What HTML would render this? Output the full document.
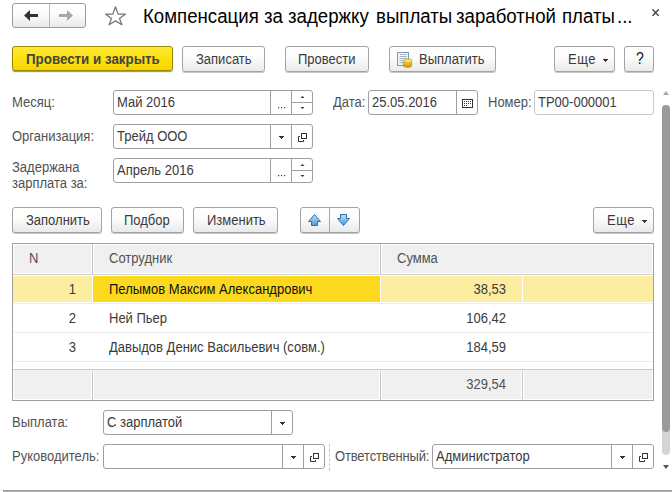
<!DOCTYPE html>
<html><head><meta charset="utf-8">
<style>
html,body{margin:0;padding:0;}
body{width:672px;height:492px;overflow:hidden;background:#fff;position:relative;font-family:"Liberation Sans",sans-serif;font-size:13px;color:#3a3a3a;}
.a{position:absolute;}
.t{position:absolute;white-space:nowrap;line-height:15px;font-size:14px;transform:scaleX(0.9286);transform-origin:0 0;}
.r{text-align:right;transform-origin:100% 0;}
.ttl{font-size:20px !important;line-height:22px;color:#000;transform:scaleX(0.9325);}
.btn{position:absolute;box-sizing:border-box;height:26px;border:1px solid #a3a3a3;border-radius:3px;background:linear-gradient(#ffffff 0%,#fcfcfc 45%,#e9e9e9 100%);box-shadow:0 1px 0 rgba(0,0,0,0.22);}
.yb{background:linear-gradient(#ffe83a 0%,#fde10a 50%,#f5d500 100%);border-color:#9c8700;box-shadow:0 1px 0 rgba(100,85,0,0.55),0 2px 0 rgba(0,0,40,0.06);}
.fld{position:absolute;box-sizing:border-box;height:25px;border:1px solid #a0a0a0;border-radius:3px;background:#fff;}
.sep{position:absolute;top:0;bottom:0;width:1px;background:#a0a0a0;}
.lbl{color:#525252;}
.dd{position:absolute;width:5px;height:1px;background:#333;}
.dd::before{content:"";position:absolute;left:1px;top:1px;width:3px;height:1px;background:#333;}
.dd::after{content:"";position:absolute;left:2px;top:2px;width:1px;height:1px;background:#333;}
</style></head>
<body>
<!-- nav -->
<div class="btn" style="left:12px;top:3px;width:74px;height:25px;box-shadow:none;border-color:#9c9c9c;"></div>
<div class="a" style="left:49px;top:4px;width:1px;height:23px;background:#b8b8b8;"></div>
<svg class="a" style="left:0;top:0" width="672" height="40">
  <polygon points="24,15.5 30,10 30,21" fill="#333"/>
  <rect x="30" y="14" width="8" height="3" fill="#333"/>
  <polygon points="73,15.5 67,10 67,21" fill="#a8a8a8"/>
  <rect x="59" y="14" width="8" height="3" fill="#a8a8a8"/>
  <polygon points="115.5,6.8 118.1,14 125.6,14 119.5,18.6 121.9,24.8 115.5,20.9 109.1,24.8 111.5,18.6 105.4,14 112.9,14" fill="none" stroke="#777" stroke-width="1.25" stroke-linejoin="round"/>
  <path d="M652.8,9.8 L658.4,15.4 M658.4,9.8 L652.8,15.4" stroke="#444" stroke-width="1.35" stroke-linecap="round"/>
</svg>
<div class="t ttl" style="left:143px;top:5px;">Компенсация</div>
<div class="t ttl" style="left:264px;top:5px;">за</div>
<div class="t ttl" style="left:288px;top:5px;">задержку</div>
<div class="t ttl" style="left:376px;top:5px;">выплаты</div>
<div class="t ttl" style="left:456px;top:5px;">заработной</div>
<div class="t ttl" style="left:562px;top:5px;">платы</div>
<div class="t ttl" style="left:617px;top:5px;">...</div>

<!-- toolbar -->
<div class="btn yb" style="left:12px;top:46px;width:161px;height:25px;"></div>
<div class="t" style="left:26px;top:52px;font-weight:bold;color:#444;transform:scaleX(0.953);">Провести и закрыть</div>
<div class="btn" style="left:182px;top:46px;width:83px;"></div>
<div class="t" style="left:196px;top:52px;">Записать</div>
<div class="btn" style="left:285px;top:46px;width:84px;"></div>
<div class="t" style="left:298px;top:52px;">Провести</div>
<div class="btn" style="left:389px;top:46px;width:107px;"></div>
<svg class="a" style="left:396px;top:51px" width="18" height="18">
  <defs><linearGradient id="dg" x1="0" y1="0" x2="1" y2="1"><stop offset="0" stop-color="#ffffff"/><stop offset="1" stop-color="#dfe8f2"/></linearGradient></defs>
  <rect x="1.5" y="1.5" width="11" height="13" fill="url(#dg)" stroke="#7e97b4"/>
  <path d="M3.5,3.5h7M3.5,5.5h7M3.5,7.5h7M3.5,9.5h6M3.5,11.5h4" stroke="#a6b4c4"/>
  <ellipse cx="11.5" cy="14.3" rx="4.3" ry="2.1" fill="#e0a400" stroke="#b07f00" stroke-width="0.6"/>
  <ellipse cx="11.5" cy="12.2" rx="4.3" ry="2.1" fill="#f0c020" stroke="#b88a00" stroke-width="0.6"/>
  <ellipse cx="12" cy="9.9" rx="4.2" ry="2" fill="#ffe06a" stroke="#c09000" stroke-width="0.6"/>
</svg>
<div class="t" style="left:419px;top:52px;">Выплатить</div>
<div class="btn" style="left:554px;top:46px;width:61px;"></div>
<div class="t" style="left:568px;top:52px;letter-spacing:0.5px;">Еще</div>
<div class="dd" style="left:603px;top:59px;"></div>
<div class="btn" style="left:624px;top:46px;width:30px;"></div>
<div class="t" style="left:636px;top:50px;font-size:15.6px;line-height:17px;color:#111;transform:scaleX(0.9);">?</div>

<!-- row 1 -->
<div class="t lbl" style="left:12px;top:95px;">Месяц:</div>
<div class="fld" style="left:113px;top:90px;width:200px;">
  <div class="sep" style="left:156px;"></div>
  <div class="sep" style="left:177px;"></div>
  <div class="a" style="left:178px;top:11px;width:20px;height:1px;background:#a0a0a0;"></div>
</div>
<div class="t" style="left:117px;top:95px;">Май 2016</div>
<svg class="a" style="left:270px;top:90px" width="44" height="25">
  <rect x="8" y="17" width="1.2" height="1.2" fill="#444"/><rect x="11" y="17" width="1.2" height="1.2" fill="#444"/><rect x="14" y="17" width="1.2" height="1.2" fill="#444"/>
  <polygon points="30.5,8 32.5,6 34.5,8" fill="#333"/>
  <polygon points="30.5,17 32.5,19 34.5,17" fill="#333"/>
</svg>
<div class="t lbl" style="left:333px;top:95px;">Дата:</div>
<div class="fld" style="left:368px;top:90px;width:110px;">
  <div class="sep" style="left:87px;"></div>
</div>
<div class="t" style="left:372px;top:95px;">25.05.2016</div>
<svg class="a" style="left:462px;top:99px" width="11" height="9">
  <rect x="0.5" y="0.5" width="10" height="8" fill="none" stroke="#333"/>
  <g fill="#333"><rect x="2" y="2" width="1" height="1"/><rect x="4" y="2" width="1" height="1"/><rect x="6" y="2" width="1" height="1"/><rect x="8" y="2" width="1" height="1"/>
  <rect x="2" y="4" width="1" height="1"/><rect x="4" y="4" width="1" height="1"/><rect x="6" y="4" width="1" height="1"/><rect x="8" y="4" width="1" height="1"/>
  <rect x="2" y="6" width="1" height="1"/><rect x="4" y="6" width="1" height="1"/></g>
</svg>
<div class="t lbl" style="left:488px;top:95px;">Номер:</div>
<div class="fld" style="left:534px;top:90px;width:120px;border-color:#c8c8c8;"></div>
<div class="t" style="left:538px;top:95px;">ТР00-000001</div>

<!-- row 2 -->
<div class="t lbl" style="left:12px;top:129px;">Организация:</div>
<div class="fld" style="left:113px;top:124px;width:200px;">
  <div class="sep" style="left:156px;"></div>
  <div class="sep" style="left:177px;"></div>
</div>
<div class="t" style="left:117px;top:129px;">Трейд ООО</div>
<div class="dd" style="left:279px;top:136px;"></div>
<svg class="a" style="left:298px;top:133px" width="9" height="9">
  <rect x="3.5" y="0.5" width="5" height="5" fill="none" stroke="#333"/>
  <path d="M2,3.5H0.5V8.5H5.5V7" fill="none" stroke="#333"/>
</svg>

<!-- row 3 -->
<div class="t lbl" style="left:12px;top:159px;line-height:16px;">Задержана<br>зарплата за:</div>
<div class="fld" style="left:113px;top:158px;width:200px;">
  <div class="sep" style="left:156px;"></div>
  <div class="sep" style="left:177px;"></div>
  <div class="a" style="left:178px;top:11px;width:20px;height:1px;background:#a0a0a0;"></div>
</div>
<div class="t" style="left:117px;top:163px;">Апрель 2016</div>
<svg class="a" style="left:270px;top:158px" width="44" height="25">
  <rect x="8" y="17" width="1.2" height="1.2" fill="#444"/><rect x="11" y="17" width="1.2" height="1.2" fill="#444"/><rect x="14" y="17" width="1.2" height="1.2" fill="#444"/>
  <polygon points="30.5,8 32.5,6 34.5,8" fill="#333"/>
  <polygon points="30.5,17 32.5,19 34.5,17" fill="#333"/>
</svg>

<!-- table commands -->
<div class="btn" style="left:12px;top:207px;width:90px;"></div>
<div class="t" style="left:26px;top:213px;">Заполнить</div>
<div class="btn" style="left:111px;top:207px;width:73px;"></div>
<div class="t" style="left:124px;top:213px;">Подбор</div>
<div class="btn" style="left:193px;top:207px;width:85px;"></div>
<div class="t" style="left:207px;top:213px;">Изменить</div>
<div class="btn" style="left:300px;top:207px;width:60px;"></div>
<div class="a" style="left:329px;top:208px;width:1px;height:24px;background:#a8a8a8;"></div>
<svg class="a" style="left:300px;top:207px" width="60" height="25">
  <defs><linearGradient id="bl" x1="0" y1="0" x2="0" y2="1"><stop offset="0" stop-color="#bfe0f8"/><stop offset="1" stop-color="#4b9ad8"/></linearGradient></defs>
  <path d="M8.5,14.5 L14.5,7.5 L20.5,14.5 L17.5,14.5 L17.5,18.5 L11.5,18.5 L11.5,14.5 Z" fill="url(#bl)" stroke="#2f6fa8" stroke-linejoin="round"/>
  <path d="M37.5,11.5 L43.5,18.5 L49.5,11.5 L46.5,11.5 L46.5,7.5 L40.5,7.5 L40.5,11.5 Z" fill="url(#bl)" stroke="#2f6fa8" stroke-linejoin="round"/>
</svg>
<div class="btn" style="left:593px;top:207px;width:61px;"></div>
<div class="t" style="left:607px;top:213px;letter-spacing:0.5px;">Еще</div>
<div class="dd" style="left:642px;top:220px;"></div>

<!-- table -->
<div class="a" style="left:12px;top:243px;width:640px;height:156px;border:1px solid #a0a0a0;"></div>
<!-- header -->
<div class="a" style="left:14px;top:245px;width:77px;height:28px;background:#f0f0f0;"></div>
<div class="a" style="left:92px;top:244px;width:1px;height:30px;background:#c4c4c4;"></div>
<div class="a" style="left:94px;top:245px;width:285px;height:28px;background:#f0f0f0;"></div>
<div class="a" style="left:380px;top:244px;width:1px;height:30px;background:#c4c4c4;"></div>
<div class="a" style="left:382px;top:245px;width:270px;height:28px;background:#f0f0f0;"></div>
<div class="a" style="left:13px;top:274px;width:640px;height:1px;background:#d0d0d0;"></div>
<div class="t lbl" style="left:29px;top:251px;">N</div>
<div class="t lbl" style="left:109px;top:251px;">Сотрудник</div>
<div class="t lbl" style="left:397px;top:251px;">Сумма</div>
<!-- row1 -->
<div class="a" style="left:13px;top:276px;width:79px;height:26px;background:#fdeda0;"></div>
<div class="a" style="left:93px;top:276px;width:287px;height:26px;background:#fcd91e;"></div>
<div class="a" style="left:381px;top:276px;width:141px;height:26px;background:#fdeda0;"></div>
<div class="a" style="left:523px;top:276px;width:130px;height:26px;background:#fdeda0;"></div>
<div class="a" style="left:13px;top:303px;width:640px;height:1px;background:#ebebeb;"></div>
<div class="a" style="left:13px;top:332px;width:640px;height:1px;background:#ebebeb;"></div>
<div class="a" style="left:13px;top:361px;width:640px;height:1px;background:#ebebeb;"></div>
<div class="t r" style="left:68px;top:282px;width:8px;" >1</div>
<div class="t" style="left:109px;top:282px;color:#111;">Пелымов Максим Александрович</div>
<div class="t r" style="left:400px;top:282px;width:106px;" >38,53</div>
<div class="t r" style="left:68px;top:311px;width:8px;" >2</div>
<div class="t" style="left:109px;top:311px;">Ней Пьер</div>
<div class="t r" style="left:400px;top:311px;width:106px;" >106,42</div>
<div class="t r" style="left:68px;top:340px;width:8px;" >3</div>
<div class="t" style="left:109px;top:340px;">Давыдов Денис Васильевич (совм.)</div>
<div class="t r" style="left:400px;top:340px;width:106px;" >184,59</div>
<!-- footer -->
<div class="a" style="left:13px;top:369px;width:640px;height:1px;background:#c8c8c8;"></div>
<div class="a" style="left:14px;top:370px;width:77px;height:29px;background:#f0f0f0;"></div>
<div class="a" style="left:92px;top:370px;width:1px;height:30px;background:#c8c8c8;"></div>
<div class="a" style="left:94px;top:370px;width:285px;height:29px;background:#f0f0f0;"></div>
<div class="a" style="left:380px;top:370px;width:1px;height:30px;background:#c8c8c8;"></div>
<div class="a" style="left:382px;top:370px;width:139px;height:29px;background:#f0f0f0;"></div>
<div class="a" style="left:522px;top:370px;width:1px;height:30px;background:#c8c8c8;"></div>
<div class="a" style="left:524px;top:370px;width:128px;height:29px;background:#f0f0f0;"></div>
<div class="t lbl r" style="left:400px;top:377px;width:106px;" >329,54</div>

<!-- bottom fields -->
<div class="t lbl" style="left:12px;top:415px;">Выплата:</div>
<div class="fld" style="left:103px;top:410px;width:190px;">
  <div class="sep" style="left:167px;"></div>
</div>
<div class="t" style="left:107px;top:415px;">С зарплатой</div>
<div class="dd" style="left:280px;top:422px;"></div>

<div class="t lbl" style="left:12px;top:449px;">Руководитель:</div>
<div class="fld" style="left:103px;top:444px;width:222px;">
  <div class="sep" style="left:178px;"></div>
  <div class="sep" style="left:199px;"></div>
</div>
<div class="dd" style="left:291px;top:456px;"></div>
<svg class="a" style="left:310px;top:453px" width="9" height="9">
  <rect x="3.5" y="0.5" width="5" height="5" fill="none" stroke="#333"/>
  <path d="M2,3.5H0.5V8.5H5.5V7" fill="none" stroke="#333"/>
</svg>
<div class="a" style="left:329px;top:444px;width:0;height:27px;border-left:1px dashed #c8c8c8;"></div>
<div class="t lbl" style="left:335px;top:449px;letter-spacing:-0.17px;">Ответственный:</div>
<div class="fld" style="left:432px;top:444px;width:222px;">
  <div class="sep" style="left:178px;"></div>
  <div class="sep" style="left:199px;"></div>
</div>
<div class="t" style="left:436px;top:449px;">Администратор</div>
<div class="dd" style="left:620px;top:456px;"></div>
<svg class="a" style="left:639px;top:453px" width="9" height="9">
  <rect x="3.5" y="0.5" width="5" height="5" fill="none" stroke="#333"/>
  <path d="M2,3.5H0.5V8.5H5.5V7" fill="none" stroke="#333"/>
</svg>

<!-- scrollbar -->
<svg class="a" style="left:660px;top:88px" width="12" height="384">
  <polygon points="3,7 6,3 9,7" fill="#a8a8a8"/>
  <rect x="2" y="17" width="8" height="350" rx="4" fill="#d4d4d4"/>
  <rect x="2" y="17" width="8" height="327" rx="4" fill="#9b9b9b"/>
  <polygon points="3,377 9,377 6,381" fill="#555"/>
</svg>
<div class="a" style="left:3px;top:490px;width:669px;height:1px;background:#9d9ea2;"></div>
<div class="a" style="left:3px;top:491px;width:669px;height:1px;background:#abacb0;"></div>
</body></html>
